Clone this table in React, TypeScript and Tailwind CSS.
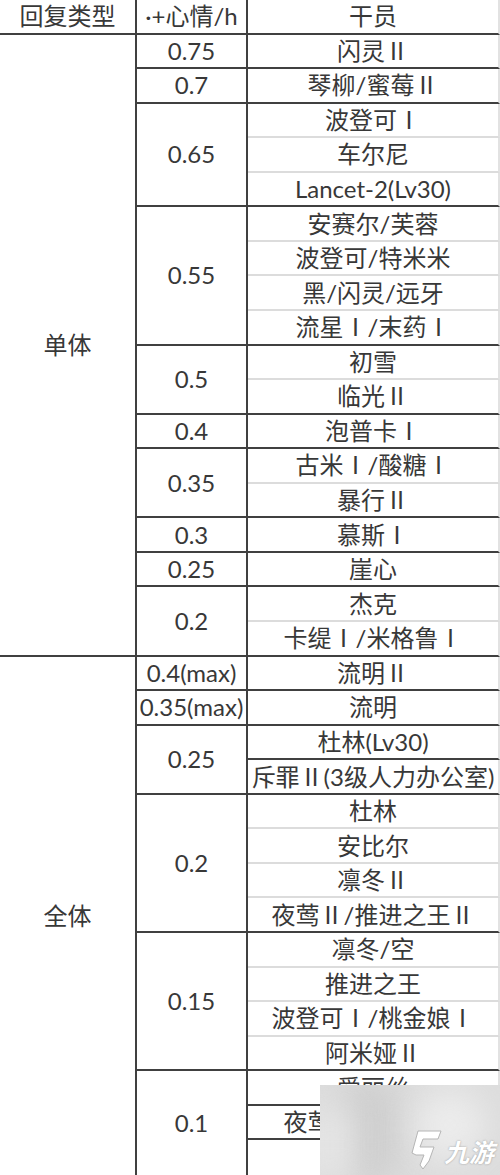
import React from "react";

type Sub = { v: string; rows: string[]; dark?: boolean };
type Group = { name: string; subs: Sub[] };

const groups: Group[] = [
  {
    name: "单体",
    subs: [
      { v: "0.75", rows: ["闪灵Ⅱ"] },
      { v: "0.7", rows: ["琴柳/蜜莓Ⅱ"] },
      { v: "0.65", rows: ["波登可Ⅰ", "车尔尼", "Lancet-2(Lv30)"] },
      { v: "0.55", rows: ["安赛尔/芙蓉", "波登可/特米米", "黑/闪灵/远牙", "流星Ⅰ/末药Ⅰ"] },
      { v: "0.5", rows: ["初雪", "临光Ⅱ"] },
      { v: "0.4", rows: ["泡普卡Ⅰ"] },
      { v: "0.35", rows: ["古米Ⅰ/酸糖Ⅰ", "暴行Ⅱ"] },
      { v: "0.3", rows: ["慕斯Ⅰ"] },
      { v: "0.25", rows: ["崖心"] },
      { v: "0.2", rows: ["杰克", "卡缇Ⅰ/米格鲁Ⅰ"] },
    ],
  },
  {
    name: "全体",
    subs: [
      { v: "0.4(max)", rows: ["流明Ⅱ"] },
      { v: "0.35(max)", rows: ["流明"] },
      { v: "0.25", rows: ["杜林(Lv30)", "斥罪Ⅱ(3级人力办公室)"], dark: true },
      { v: "0.2", rows: ["杜林", "安比尔", "凛冬Ⅱ", "夜莺Ⅱ/推进之王Ⅱ"] },
      { v: "0.15", rows: ["凛冬/空", "推进之王", "波登可Ⅰ/桃金娘Ⅰ", "阿米娅Ⅱ"] },
      { v: "0.1", rows: ["爱丽丝", "夜莺Ⅰ/推进之王", ""], dark: true },
    ],
  },
];

const RH = 34.56;

export default function App() {
  return (
    <div
      className="relative w-[500px] h-[1175px] overflow-hidden bg-white text-[#383838] text-[24px] leading-[28px]"
      style={{ fontFamily: 'Lato, "Noto Sans CJK SC", sans-serif' }}
    >
      {/* header */}
      <div className="flex h-[34.56px]">
        <div className="w-[137px] shrink-0 flex items-center justify-center border-b-2 border-r-2 border-[#404040]">
          回复类型
        </div>
        <div className="w-[111px] shrink-0 flex items-center justify-center border-b-2 border-r-2 border-[#404040] whitespace-nowrap">
          ·+心情/h
        </div>
        <div className="flex-1 flex items-center justify-center border-b-2 border-[#404040] border-r-2 border-r-[#e2e2e2]">
          干员
        </div>
      </div>

      {groups.map((g, gi) => {
        const total = g.subs.reduce((a, s) => a + s.rows.length, 0);
        const last = gi === groups.length - 1;
        return (
          <div key={g.name} className="flex">
            <div
              className={
                "w-[137px] shrink-0 flex items-center justify-center border-r-2 border-[#404040] " +
                (last ? "" : "border-b-2")
              }
              style={{ height: total * RH }}
            >
              {g.name}
            </div>
            <div className="flex-1 flex flex-col">
              {g.subs.map((s, si) => {
                const lastSub = last && si === g.subs.length - 1;
                return (
                  <div key={si} className="flex">
                    <div
                      className={
                        "w-[111px] shrink-0 flex items-center justify-center border-r-2 border-[#404040] whitespace-nowrap " +
                        (lastSub ? "" : "border-b-2")
                      }
                      style={{ height: s.rows.length * RH }}
                    >
                      {s.v}
                    </div>
                    <div className="flex-1 flex flex-col min-w-0">
                      {s.rows.map((r, ri) => {
                        const lastRow = ri === s.rows.length - 1;
                        const cls = lastRow
                          ? lastSub
                            ? ""
                            : "border-b-2 border-b-[#404040]"
                          : s.dark
                          ? "border-b-2 border-b-[#404040]"
                          : "border-b-2 border-b-[#dcdcdc]";
                        return (
                          <div
                            key={ri}
                            className={
                              "flex items-center justify-center overflow-hidden whitespace-nowrap border-r-2 border-r-[#e2e2e2] " +
                              cls
                            }
                            style={{ height: RH }}
                          >
                            {r}
                          </div>
                        );
                      })}
                    </div>
                  </div>
                );
              })}
            </div>
          </div>
        );
      })}

      {/* watermark */}
      <div className="absolute left-[320px] top-[1085px] w-[180px] h-[90px] overflow-hidden bg-[#dddddd]">
        <div className="absolute left-[20px] top-[-10px] w-[60px] h-[110px] rounded-full bg-[#cfcfcf] blur-lg" />
        <div className="absolute left-[95px] top-[5px] w-[70px] h-[70px] rounded-full bg-[#ececec] blur-lg" />
        <div className="absolute left-[-10px] top-[20px] w-[40px] h-[80px] rounded-full bg-[#e6e6e6] blur-lg" />
        <svg
          className="absolute left-[88px] top-[44px]"
          width="36"
          height="42"
          viewBox="0 0 36 42"
        >
          <path
            d="M10 2 L33 2 L30 10 L15 10 L12 18 L26 18 L21 32 L15 40 L12 36 L16 26 L8 26 L4 24 Z"
            fill="#ffffff"
            stroke="#b5b5b5"
            strokeWidth="1"
          />
        </svg>
        <div className="absolute left-[124px] top-[52px] text-[25px] leading-[30px] font-bold italic text-white [text-shadow:0_0_2px_rgba(0,0,0,0.35)]">
          九游
        </div>
      </div>
    </div>
  );
}
